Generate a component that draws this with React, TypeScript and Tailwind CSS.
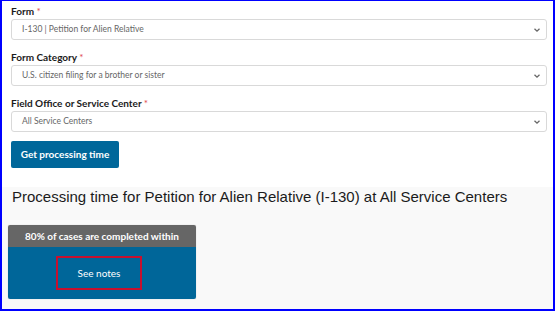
const Chevron = () => (
  <svg width="8" height="6" viewBox="0 0 8 6" className="absolute right-[5px] top-1/2 -translate-y-1/2">
    <path d="M1.5 1.8 L4 4.2 L6.5 1.8" fill="none" stroke="#666" strokeWidth="1.3" />
  </svg>
)

const Field = ({ label, value }: { label: string; value: string }) => (
  <div className="flex flex-col">
    <div className="text-[10px] font-bold text-[#1b1b1b] leading-[12px] h-[13px]">
      {label} <span className="text-[#e0474c] font-normal">*</span>
    </div>
    <div className="relative mt-[1px] h-[21px] border border-[#d9d9d9] rounded-[3px] bg-white flex items-center pl-[10px] text-[8.5px] text-[#666]">
      {value}
      <Chevron />
    </div>
  </div>
)

export default function App() {
  return (
    <div className="w-[556px] h-[311px] bg-white" style={{ fontFamily: "Lato, 'Open Sans', sans-serif" }}>
      <div className="w-[555px] h-[311px] border-l-2 border-t border-r-2 border-b-2 border-[#0000ff] flex flex-col">
        <div className="pl-[9px] pr-[6px] pt-[4px] flex flex-col gap-[11px]">
          <Field label="Form" value="I-130 | Petition for Alien Relative" />
          <Field label="Form Category" value="U.S. citizen filing for a brother or sister" />
          <Field label="Field Office or Service Center" value="All Service Centers" />
        </div>
        <div className="pl-[9px] mt-[9px]">
          <div className="w-[108px] h-[27px] bg-[#00679a] rounded-[2px] flex items-center justify-center text-white text-[10px] font-bold">
            Get processing time
          </div>
        </div>
        <div className="mt-[19px] flex-1 bg-[#f9f9f9] pl-[10px] pt-[1px]">
          <div className="text-[15px] text-[#1b1b1b] leading-[18px]" style={{ fontFamily: "'Liberation Sans', Arial, sans-serif" }}>
            Processing time for Petition for Alien Relative (I-130) at All Service Centers
          </div>
          <div className="mt-[19px] -ml-[4px] w-[188px] rounded-[2px] overflow-hidden shadow-[0_0_1px_rgba(0,0,0,0.3)]">
            <div className="h-[22px] bg-[#666666] flex items-center justify-center text-white text-[10px] font-bold">
              80% of cases are completed within
            </div>
            <div className="h-[52px] bg-[#006699] flex items-center pl-[48px]">
              <div className="w-[86px] h-[34px] border-2 border-[#c8102e] flex items-center justify-center text-white text-[10px]">
                See notes
              </div>
            </div>
          </div>
        </div>
      </div>
    </div>
  )
}
